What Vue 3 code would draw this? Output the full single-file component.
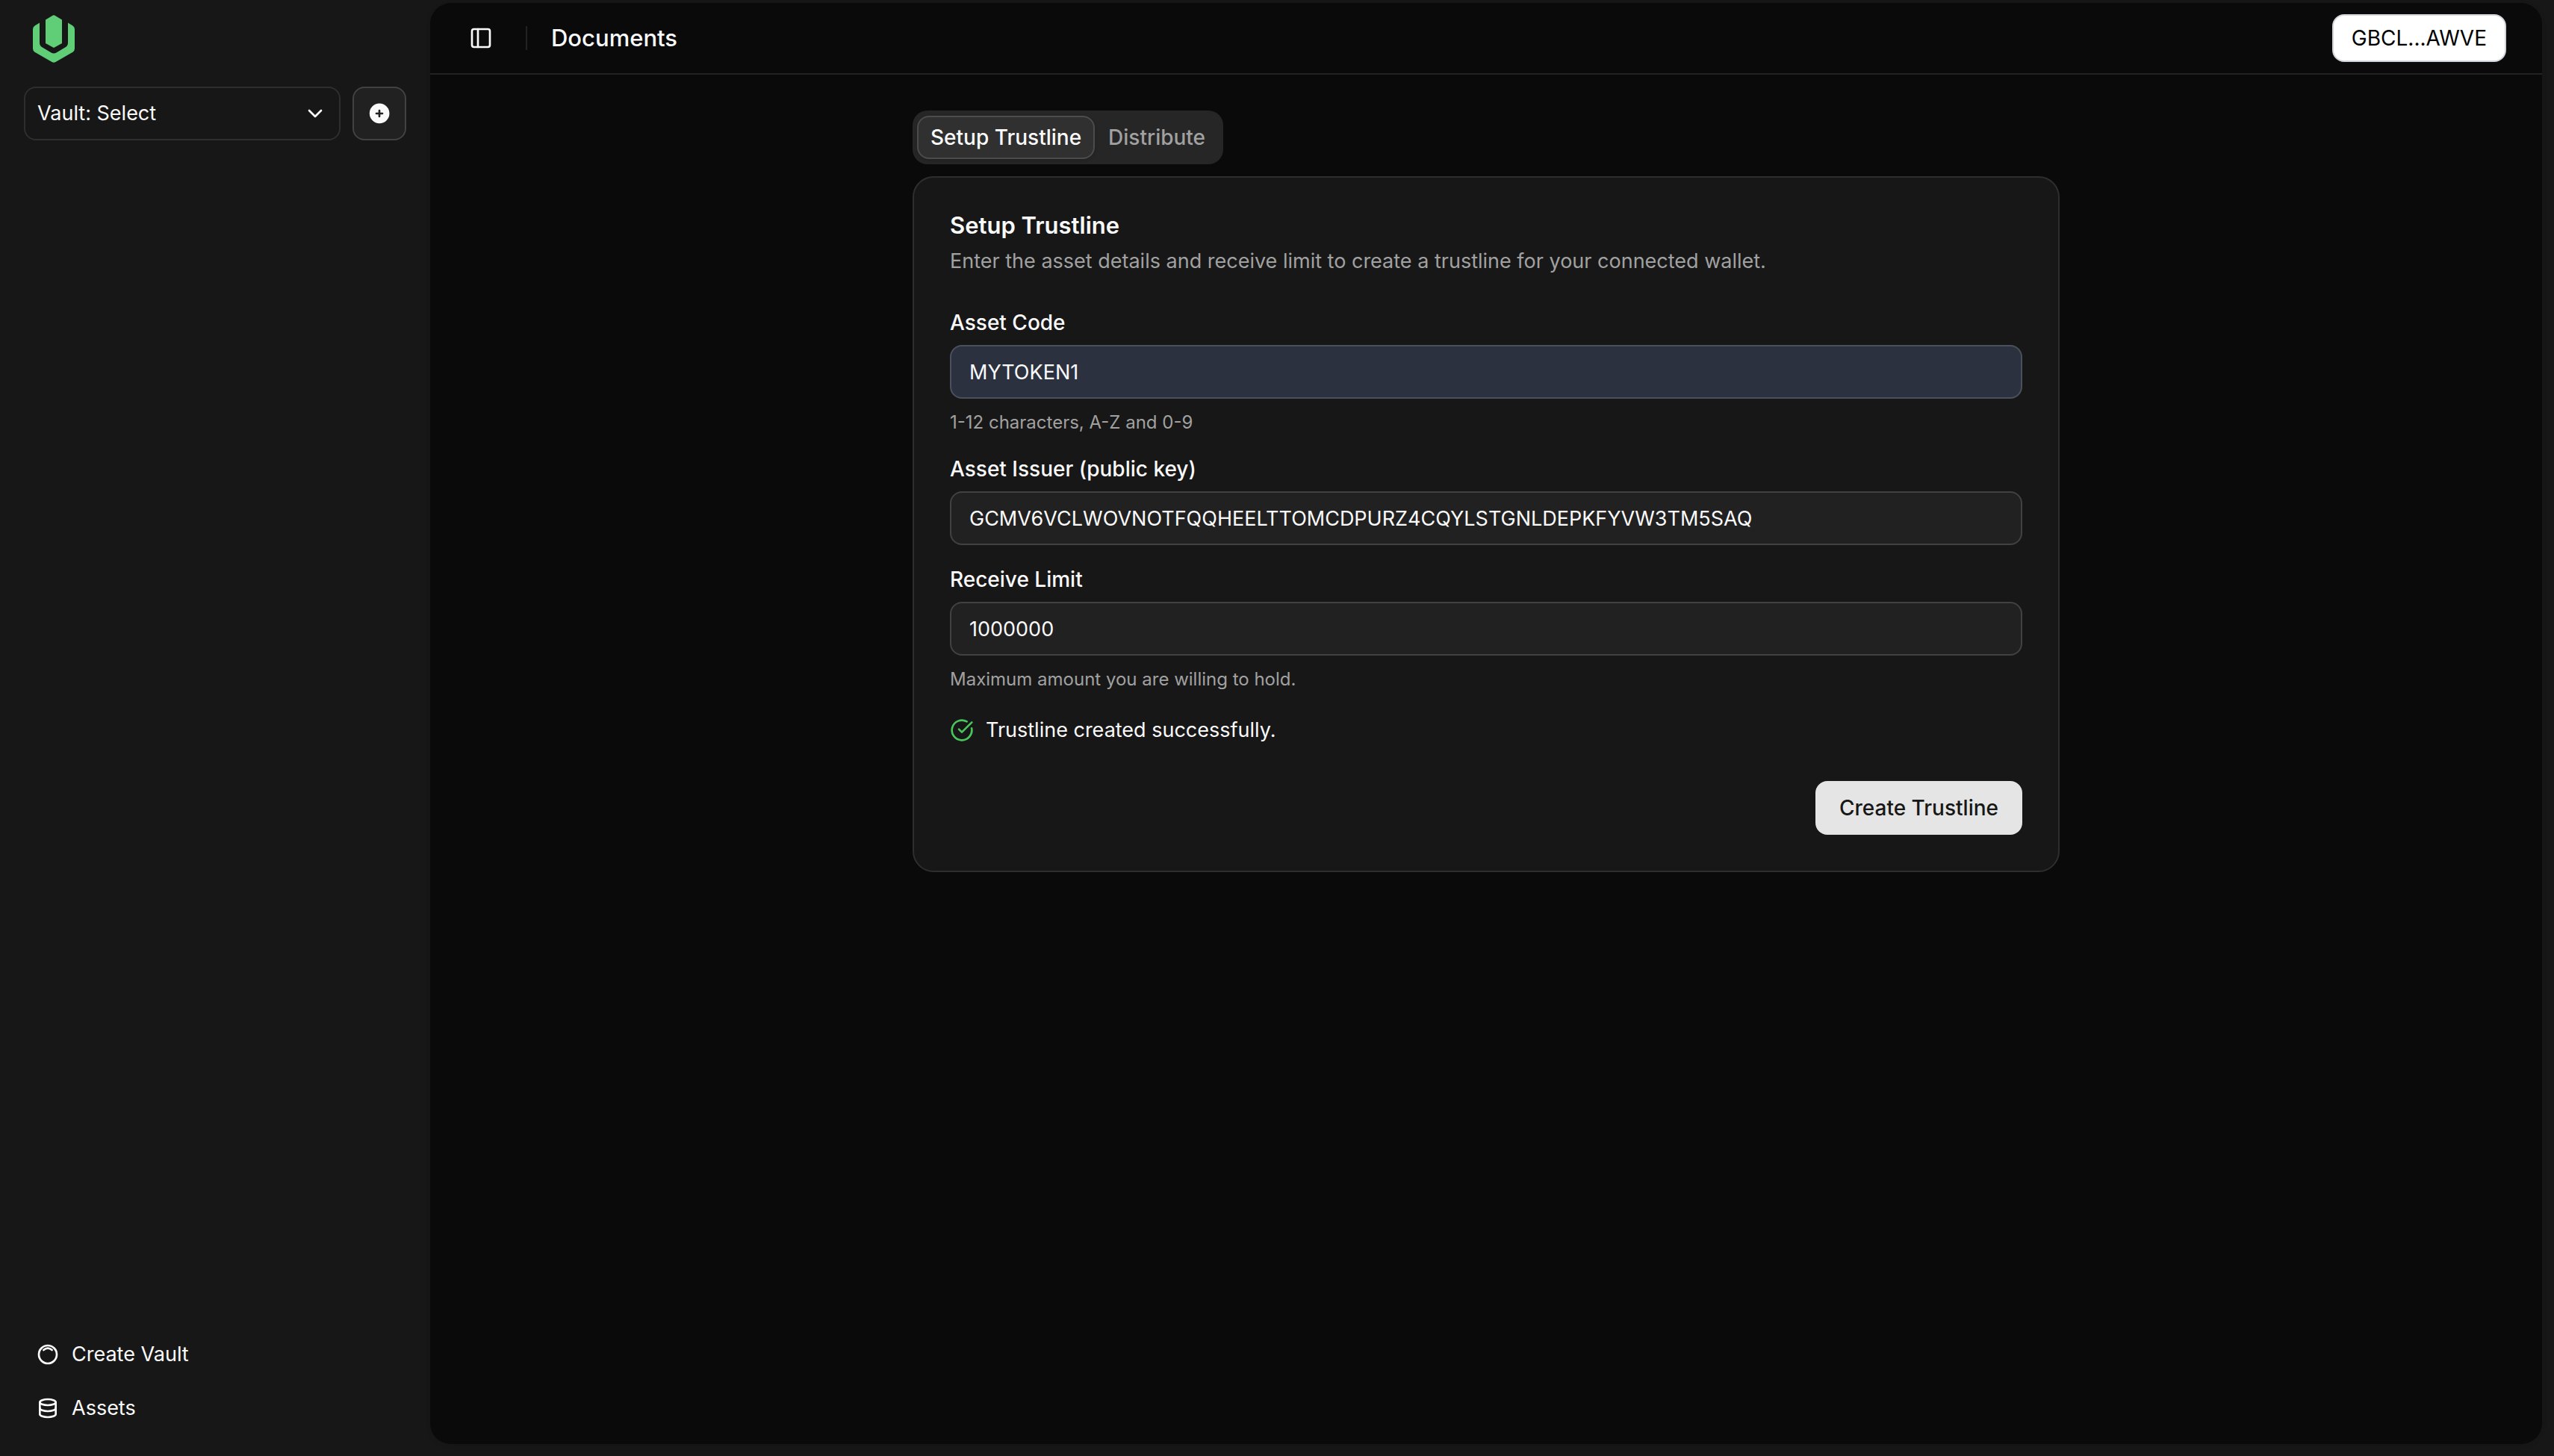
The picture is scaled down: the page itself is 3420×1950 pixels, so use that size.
<script setup>
import { ref } from 'vue'

const vaults = ['Vault: Select']
const vault = ref(vaults[0])
const tabs = ['Setup Trustline', 'Distribute']
const activeTab = ref(tabs[0])
const assetCode = ref('MYTOKEN1')
const issuer = ref('GCMV6VCLWOVNOTFQQHEELTTOMCDPURZ4CQYLSTGNLDEPKFYVW3TM5SAQ')
const limit = ref('1000000')
</script>

<template>
  <div class="app">
    <aside class="sidebar">
      <a class="brand" href="#" aria-label="Home">
        <svg class="logo" viewBox="0 0 56 64" aria-hidden="true">
          <path d="M17 6.500 26.500.700Q28 0 29.500.700L39 6.500V38L28 44 17 38Z" />
          <path d="M9 10.500V37Q9 41 12 43L24.500 50.500Q28 52.500 31.500 50.500L44 43Q47 41 47 37V10.500L53.500 14.500Q56 16 56 19V45Q56 48 53.500 49.800L30.500 63Q28 64.500 25.500 63L2.500 49.800Q0 48 0 45V19Q0 16 2.500 14.500Z" />
        </svg>
      </a>
      <div class="vault-row">
        <div class="select-wrap">
          <select v-model="vault" class="select" aria-label="Vault">
            <option v-for="v in vaults" :key="v">{{ v }}</option>
          </select>
          <svg class="icon chevron" viewBox="0 0 24 24" aria-hidden="true"><path d="m6 9 6 6 6-6" /></svg>
        </div>
        <button class="add" type="button" aria-label="Add vault">
          <svg class="icon solid" viewBox="0 0 24 24" aria-hidden="true">
            <path d="M4.929 4.929a10 10 0 1 1 14.141 14.141a10 10 0 0 1 -14.14 -14.14zm8.071 4.071a1 1 0 1 0 -2 0v2h-2a1 1 0 1 0 0 2h2v2a1 1 0 1 0 2 0v-2h2a1 1 0 1 0 0 -2h-2v-2z" />
          </svg>
        </button>
      </div>
      <nav class="nav">
        <a href="#">
          <svg class="icon" viewBox="0 0 24 24" aria-hidden="true"><circle cx="12" cy="12" r="9" /><path d="M7.800 7.500Q12 3.800 16.200 7.500" /></svg>
          <span>Create Vault</span>
        </a>
        <a href="#">
          <svg class="icon" viewBox="0 0 24 24" aria-hidden="true">
            <ellipse cx="12" cy="6" rx="8" ry="3" /><path d="M4 6v6a8 3 0 0 0 16 0V6" /><path d="M4 12v6a8 3 0 0 0 16 0v-6" />
          </svg>
          <span>Assets</span>
        </a>
      </nav>
    </aside>

    <main class="main">
      <header class="header">
        <button class="trigger" type="button" aria-label="Toggle sidebar">
          <svg class="icon" viewBox="0 0 24 24" aria-hidden="true"><rect x="3" y="3" width="18" height="18" rx="2" /><path d="M9 3v18" /></svg>
        </button>
        <span class="separator"></span>
        <h1>Documents</h1>
        <button class="wallet" type="button">GBCL...AWVE</button>
      </header>

      <div class="content">
        <div class="tabs" role="tablist">
          <button
            v-for="tab in tabs"
            :key="tab"
            type="button"
            role="tab"
            class="tab"
            :class="{ active: tab === activeTab }"
            :aria-selected="tab === activeTab"
            @click="activeTab = tab"
          >{{ tab }}</button>
        </div>

        <section class="card">
          <div class="card-head">
            <h2>Setup Trustline</h2>
            <p>Enter the asset details and receive limit to create a trustline for your connected wallet.</p>
          </div>
          <form class="form" @submit.prevent>
            <div class="fields">
              <div class="field">
                <label for="code">Asset Code</label>
                <input id="code" v-model="assetCode" class="filled" type="text" aria-describedby="code-hint" />
                <p id="code-hint" class="hint">1-12 characters, A-Z and 0-9</p>
              </div>
              <div class="field">
                <label for="issuer">Asset Issuer (public key)</label>
                <input id="issuer" v-model="issuer" type="text" spellcheck="false" />
              </div>
              <div class="field">
                <label for="limit">Receive Limit</label>
                <input id="limit" v-model="limit" type="text" aria-describedby="limit-hint" />
                <p id="limit-hint" class="hint">Maximum amount you are willing to hold.</p>
              </div>
              <div class="status" role="status">
                <svg class="icon ok" viewBox="0 0 24 24" aria-hidden="true"><path d="M21.801 10A10 10 0 1 1 17 3.335" /><path d="m9 11 3 3L22 4" /></svg>
                <span>Trustline created successfully.</span>
              </div>
            </div>
            <button class="submit" type="submit">Create Trustline</button>
          </form>
        </section>
      </div>
    </main>
  </div>
</template>

<style>
body {
  background: #171717;
}
</style>

<style scoped>
.app,
.app * {
  box-sizing: border-box;
  margin: 0;
}
.app {
  display: flex;
  min-height: 100vh;
  background: #171717;
  color: #fafafa;
  font-family: Inter, sans-serif;
  font-size: 27px;
  line-height: 40px;
}
button,
input,
select {
  font: inherit;
  color: inherit;
}
button {
  display: flex;
  align-items: center;
  justify-content: center;
  padding: 0;
  border: 0;
  background: none;
}
a {
  color: inherit;
  text-decoration: none;
}
.icon {
  flex: none;
  width: 32px;
  height: 32px;
  fill: none;
  stroke: currentColor;
  stroke-width: 2;
  stroke-linecap: round;
  stroke-linejoin: round;
}
.icon.solid {
  fill: currentColor;
  stroke: none;
}
.sidebar {
  display: flex;
  flex: none;
  flex-direction: column;
  width: 576px;
  padding: 20px 32px 32px;
}
.brand {
  display: flex;
  padding: 0 12px;
}
.logo {
  width: 56px;
  height: 64px;
  fill: #5fce76;
}
.vault-row {
  display: flex;
  gap: 16px;
  margin-top: 32px;
}
.select-wrap {
  position: relative;
  flex: 1;
}
.select {
  display: block;
  width: 100%;
  height: 72px;
  padding: 0 64px 0 16px;
  border: 2px solid #2e2e2e;
  border-radius: 16px;
  background: #171717;
  appearance: none;
}
.chevron {
  position: absolute;
  top: 20px;
  right: 18px;
  pointer-events: none;
}
.add {
  width: 72px;
  height: 72px;
  border: 2px solid #424242;
  border-radius: 16px;
  background: #212121;
}
.nav {
  display: flex;
  flex-direction: column;
  gap: 8px;
  margin-top: auto;
}
.nav a {
  display: flex;
  align-items: center;
  gap: 16px;
  height: 64px;
  padding: 0 16px;
}
.main {
  flex: 1;
  min-width: 0;
  margin: 4px 16px 16px 0;
  border-radius: 28px;
  background: #0a0a0a;
  box-shadow: 0 2px 6px rgba(0, 0, 0, 0.1);
}
.header {
  display: flex;
  align-items: center;
  height: 96px;
  padding: 0 48px 0 40px;
  border-bottom: 2px solid #222222;
}
.trigger {
  width: 56px;
  height: 56px;
}
.separator {
  width: 2px;
  height: 32px;
  margin: 0 32px;
  background: #222222;
}
h1 {
  font-size: 31px;
  font-weight: 500;
  line-height: 48px;
}
.wallet {
  height: 64px;
  margin-left: auto;
  padding: 0 24px;
  border: 2px solid #d1d5db;
  border-radius: 16px;
  background: #ffffff;
  color: #000000;
  font-size: 28px;
}
.content {
  display: flex;
  flex-direction: column;
  align-items: flex-start;
  gap: 16px;
  max-width: 1536px;
  margin: 48px auto 0;
}
.tabs {
  display: flex;
  align-items: center;
  height: 72px;
  padding: 6px;
  border-radius: 20px;
  background: #262626;
}
.tab {
  height: 58px;
  padding: 0 16px;
  border: 2px solid transparent;
  border-radius: 16px;
  color: #a1a1a1;
  font-size: 28px;
  font-weight: 500;
}
.tab.active {
  border-color: #4c4c4c;
  background: #303030;
  color: #fafafa;
  box-shadow: 0 2px 4px rgba(0, 0, 0, 0.15);
}
.card {
  display: flex;
  flex-direction: column;
  gap: 48px;
  width: 100%;
  padding: 48px;
  border: 2px solid #2e2e2e;
  border-radius: 28px;
  background: #171717;
}
.card-head {
  display: flex;
  flex-direction: column;
  gap: 12px;
}
h2 {
  font-size: 31px;
  font-weight: 600;
  line-height: 32px;
}
.card-head p,
.hint {
  color: #a1a1a1;
}
.form {
  display: flex;
  flex-direction: column;
  gap: 48px;
}
.fields {
  display: flex;
  flex-direction: column;
  gap: 32px;
}
.field {
  display: flex;
  flex-direction: column;
  gap: 16px;
}
label {
  font-size: 28px;
  font-weight: 500;
  line-height: 28px;
}
.field input {
  width: 100%;
  height: 72px;
  padding: 0 24px;
  border: 2px solid #424242;
  border-radius: 16px;
  background: #212121;
}
.field input.filled {
  border-color: #4b505d;
  background: #2c3140;
}
.field .hint {
  font-size: 24px;
  line-height: 32px;
}
.status {
  display: flex;
  align-items: center;
  gap: 16px;
}
.ok {
  color: #4ac45c;
}
.submit {
  align-self: flex-end;
  height: 72px;
  padding: 0 32px;
  border-radius: 16px;
  background: #e5e5e5;
  color: #171717;
  font-size: 28px;
  font-weight: 500;
}
</style>
